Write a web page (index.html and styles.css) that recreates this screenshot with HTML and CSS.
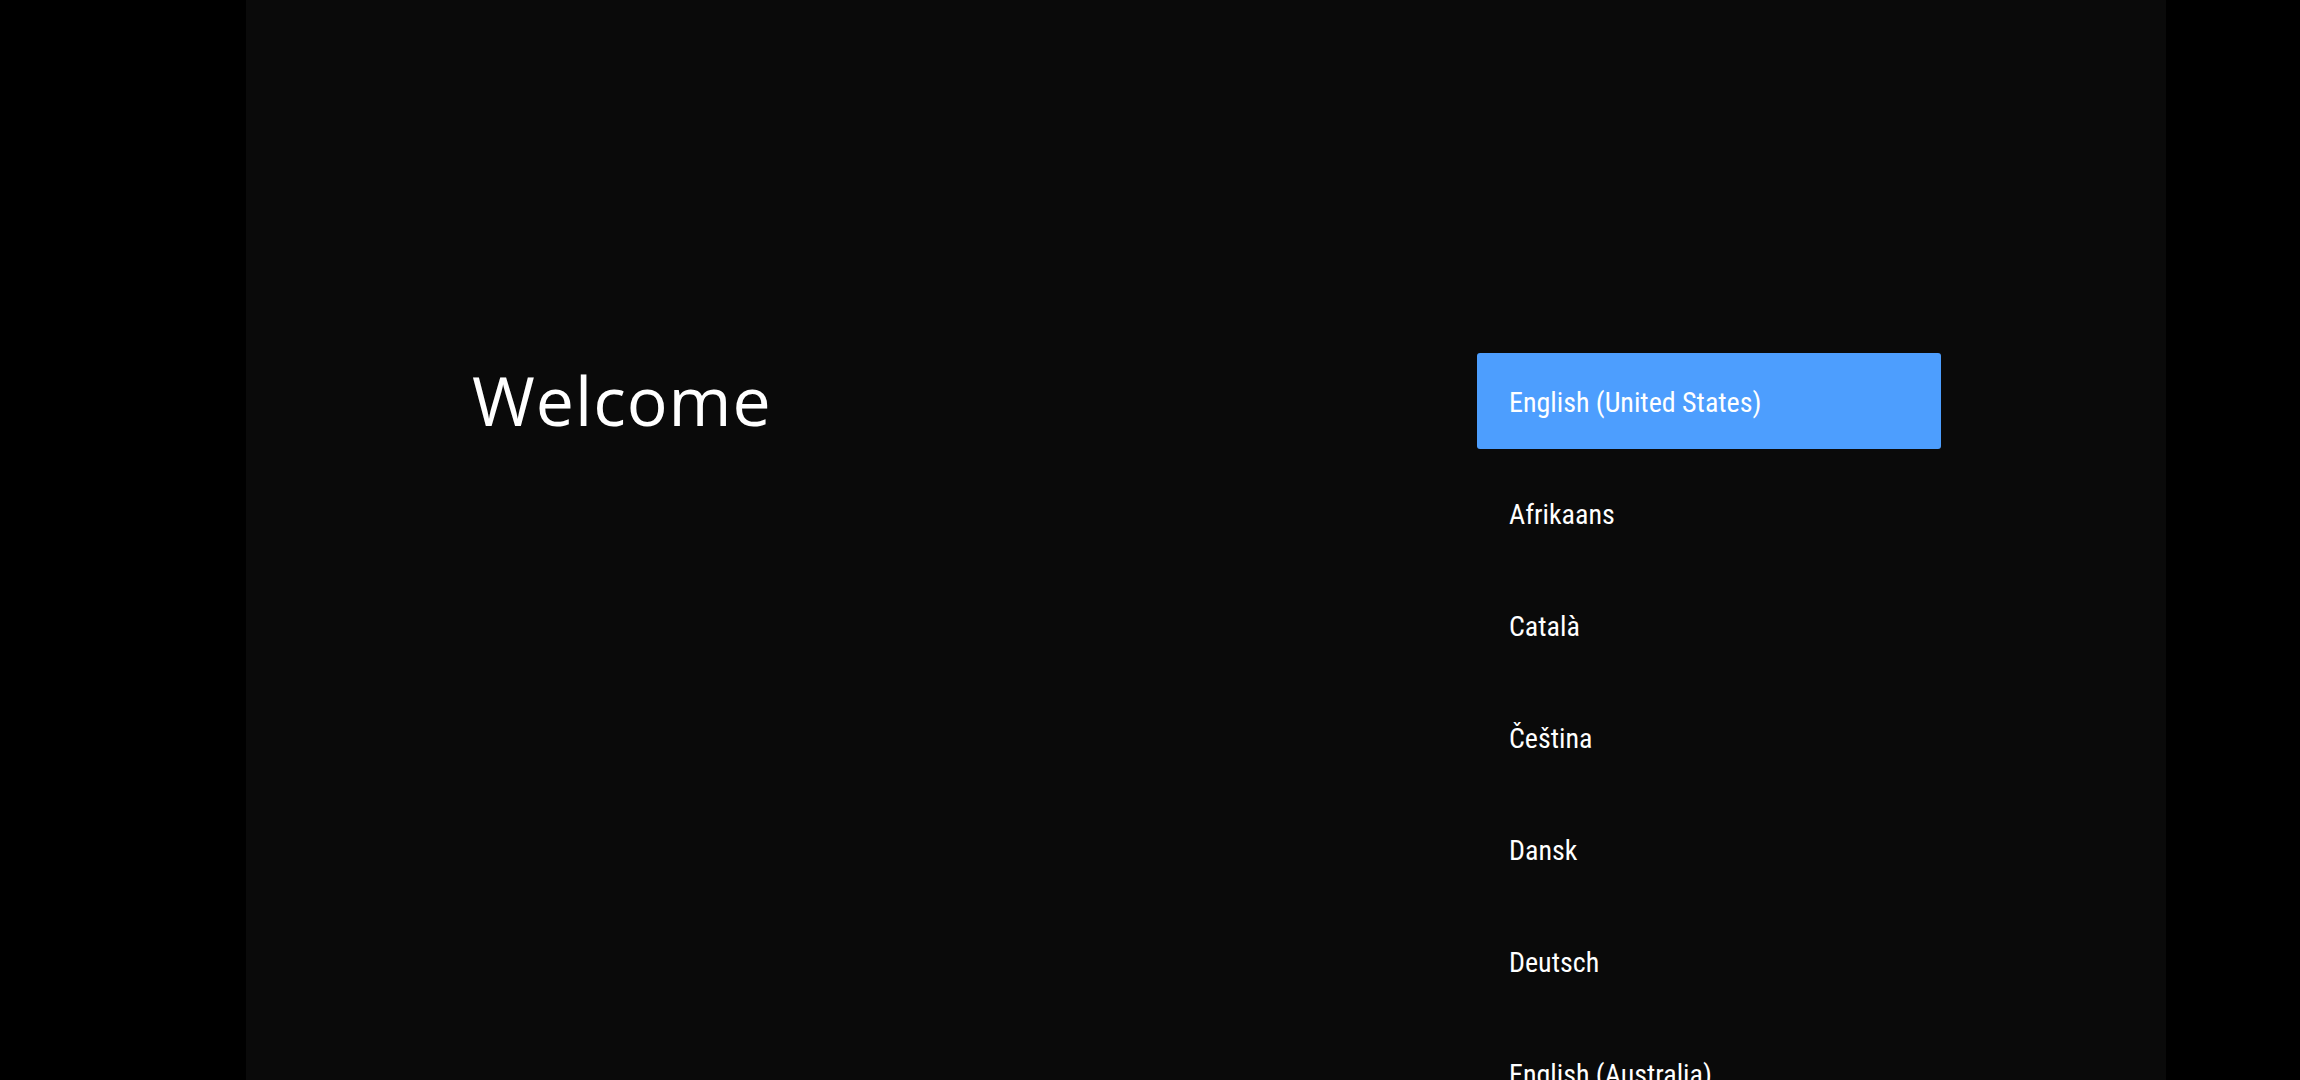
FILE: index.html
```html
<!DOCTYPE html>
<html>
<head>
<meta charset="utf-8">
<link rel="stylesheet" href="styles.css">
</head>
<body>
<div class="panel">
  <div class="intro">
    <h1 class="title">Welcome</h1>
  </div>
  <ul class="langs">
    <li class="lang selected"><span class="label">English (United States)</span></li>
    <li class="lang"><span class="label">Afrikaans</span></li>
    <li class="lang"><span class="label">Català</span></li>
    <li class="lang"><span class="label">Čeština</span></li>
    <li class="lang"><span class="label">Dansk</span></li>
    <li class="lang"><span class="label">Deutsch</span></li>
    <li class="lang"><span class="label">English (Australia)</span></li>
    <li class="lang"><span class="label">English (Canada)</span></li>
  </ul>
</div>
</body>
</html>
```
FILE: styles.css
```css
html, body {
  margin: 0;
  padding: 0;
  background: #000;
  height: 1080px;
  overflow: hidden;
}
body {
  display: flex;
}
.panel {
  width: 1920px;
  height: 1080px;
  margin-left: 246px;
  background: #0a0a0a;
  display: flex;
  justify-content: space-between;
  padding: 0 225px 0 226px;
  box-sizing: border-box;
  overflow: hidden;
  flex: none;
}
.intro {
  padding-top: 360px;
}
.title {
  margin: 0;
  font-family: "Open Sans", sans-serif;
  font-weight: 500;
  font-size: 68px;
  line-height: 80px;
  letter-spacing: 1px;
  color: #fff;
}
.langs {
  list-style: none;
  margin: 0;
  padding: 353px 0 0 0;
  width: 464px;
  display: flex;
  flex-direction: column;
  gap: 16px;
}
.lang {
  height: 96px;
  flex: none;
  display: flex;
  align-items: center;
  padding: 3px 0 0 32px;
  box-sizing: border-box;
  border-radius: 3px;
  font-family: Roboto, "Noto Sans", sans-serif;
  font-stretch: condensed;
  font-size: 28px;
  color: #fff;
}
.label {
  white-space: nowrap;
}
.selected {
  background: #4d9efe;
}
```
